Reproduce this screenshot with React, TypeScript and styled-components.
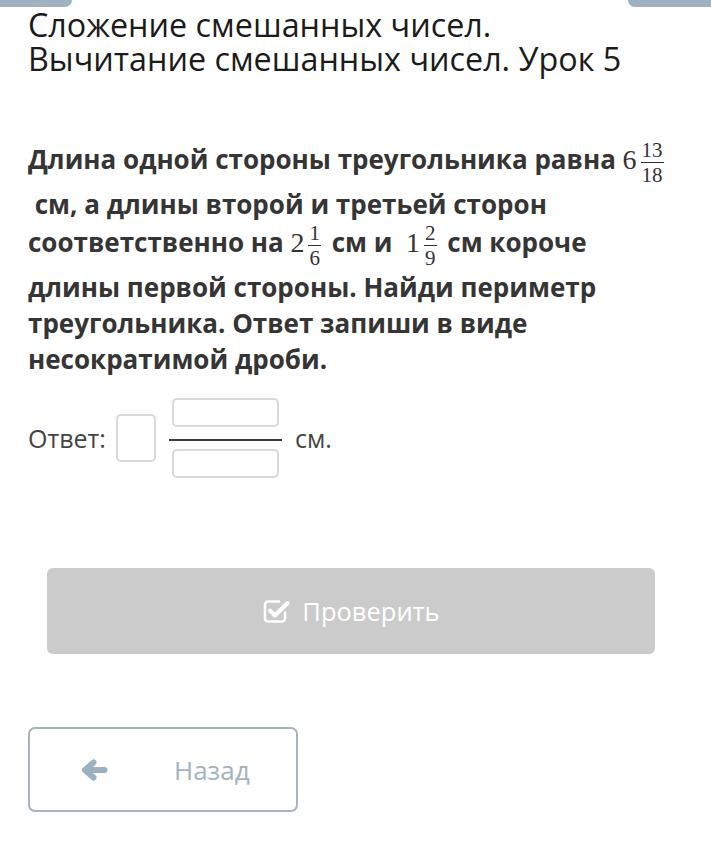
import React from 'react';
import styled, { createGlobalStyle } from 'styled-components';

const GlobalStyle = createGlobalStyle`
  body {
    margin: 0;
    background: #fff;
    font-family: 'Open Sans', 'Noto Sans', sans-serif;
  }
`;

const Page = styled.div`
  width: 711px;
  min-height: 854px;
  display: flex;
  flex-direction: column;
`;

const TopBar = styled.div`
  display: flex;
  justify-content: space-between;
  height: 7px;
`;

const Tab = styled.div<{ $width: number; $side: 'left' | 'right' }>`
  width: ${(p) => p.$width}px;
  height: 7px;
  background: #9fb2c1;
  border-radius: ${(p) => (p.$side === 'left' ? '0 0 7px 0' : '0 0 0 7px')};
`;

const Title = styled.h1`
  margin: 0;
  padding: 0 28px;
  font-size: 32.3px;
  font-weight: 400;
  line-height: 34px;
  color: #1b1b1b;
`;

const Problem = styled.p`
  margin: 64px 0 0;
  padding: 0 28px;
  font-size: 26px;
  font-weight: 700;
  line-height: 36px;
  color: #353535;
`;

const MathNum = styled.span`
  font-family: 'Liberation Serif', 'DejaVu Serif', serif;
  font-weight: 400;
  font-size: 28px;
  color: #333;
  margin-right: 4px;
`;

const Frac = styled.span`
  display: inline-flex;
  flex-direction: column;
  vertical-align: middle;
  font-family: 'Liberation Serif', 'DejaVu Serif', serif;
  font-weight: 400;
  font-size: 21px;
  text-align: center;
  color: #333;
  margin-right: 4px;
`;

const Num = styled.span`
  line-height: 22px;
  border-bottom: 1px solid #333;
  padding: 0 1px 1px;
`;

const Den = styled.span`
  line-height: 22px;
  padding-top: 1px;
`;

const AnswerRow = styled.div`
  display: flex;
  align-items: center;
  margin-top: 21px;
  padding-left: 28px;
  font-size: 25px;
  color: #444;
`;

const Label = styled.span`
  margin-right: 10px;
`;

const Cell = styled.div<{ $w: number; $h: number }>`
  width: ${(p) => p.$w}px;
  height: ${(p) => p.$h}px;
  box-sizing: border-box;
  border: 2px solid #d5dada;
  border-radius: 5px;
  background: #fff;
`;

const FracInput = styled.div`
  display: flex;
  flex-direction: column;
  align-items: center;
  margin: 0 13px;
`;

const FracLine = styled.div`
  width: 113px;
  height: 2px;
  background: #3a3a3a;
  margin: 12px 0 8px;
`;

const CheckButton = styled.button`
  margin: 90px 0 0 47px;
  width: 608px;
  height: 86px;
  border: none;
  border-radius: 6px;
  background: #cbcbcb;
  color: #fff;
  font-family: 'Open Sans', sans-serif;
  font-size: 25.5px;
  display: flex;
  align-items: center;
  justify-content: center;
  gap: 12px;
`;

const BackButton = styled.button`
  margin: 73px 0 0 28px;
  width: 270px;
  height: 85px;
  box-sizing: border-box;
  border: 2px solid #a8b4bd;
  border-radius: 7px;
  background: #fff;
  color: #a3b3be;
  font-family: 'Open Sans', sans-serif;
  font-size: 26px;
  display: flex;
  align-items: center;
  padding: 0 0 0 51px;
  gap: 66px;
`;

const CheckSquare = () => (
  <svg width="28" height="26" viewBox="0 0 28 26" fill="none">
    <path
      d="M17 3.5H6a3 3 0 0 0-3 3v14a3 3 0 0 0 3 3h14a3 3 0 0 0 3-3v-6"
      stroke="#fff"
      strokeWidth="2.6"
      strokeLinecap="round"
    />
    <path
      d="M8 12.5l5 5L25.5 5"
      stroke="#fff"
      strokeWidth="4"
      strokeLinecap="round"
      strokeLinejoin="round"
    />
  </svg>
);

const ArrowLeft = () => (
  <svg width="27" height="22" viewBox="0 0 27 22" fill="none">
    <path
      d="M23.5 11H5M12.5 3.5L4 11l8.5 7.5"
      stroke="#9bb0c0"
      strokeWidth="6"
      strokeLinecap="round"
      strokeLinejoin="round"
    />
  </svg>
);

const Fraction = ({ n, d }: { n: string; d: string }) => (
  <Frac>
    <Num>{n}</Num>
    <Den>{d}</Den>
  </Frac>
);

export default function App() {
  return (
    <Page>
      <GlobalStyle />
      <TopBar>
        <Tab $width={72} $side="left" />
        <Tab $width={83} $side="right" />
      </TopBar>
      <Title>
        Сложение смешанных чисел.
        <br />
        Вычитание смешанных чисел. Урок 5
      </Title>
      <Problem>
        Длина одной стороны треугольника равна <MathNum>6</MathNum>
        <Fraction n="13" d="18" />
        <br />
        &nbsp;см, а длины второй и третьей сторон соответственно на{' '}
        <MathNum>2</MathNum>
        <Fraction n="1" d="6" /> см и&nbsp; <MathNum>1</MathNum>
        <Fraction n="2" d="9" /> см короче длины первой стороны. Найди периметр
        треугольника. Ответ запиши в виде несократимой дроби.
      </Problem>
      <AnswerRow>
        <Label>Ответ:</Label>
        <Cell $w={40} $h={48} />
        <FracInput>
          <Cell $w={107} $h={29} />
          <FracLine />
          <Cell $w={107} $h={29} />
        </FracInput>
        <span>см.</span>
      </AnswerRow>
      <CheckButton>
        <CheckSquare />
        Проверить
      </CheckButton>
      <BackButton>
        <ArrowLeft />
        Назад
      </BackButton>
    </Page>
  );
}
